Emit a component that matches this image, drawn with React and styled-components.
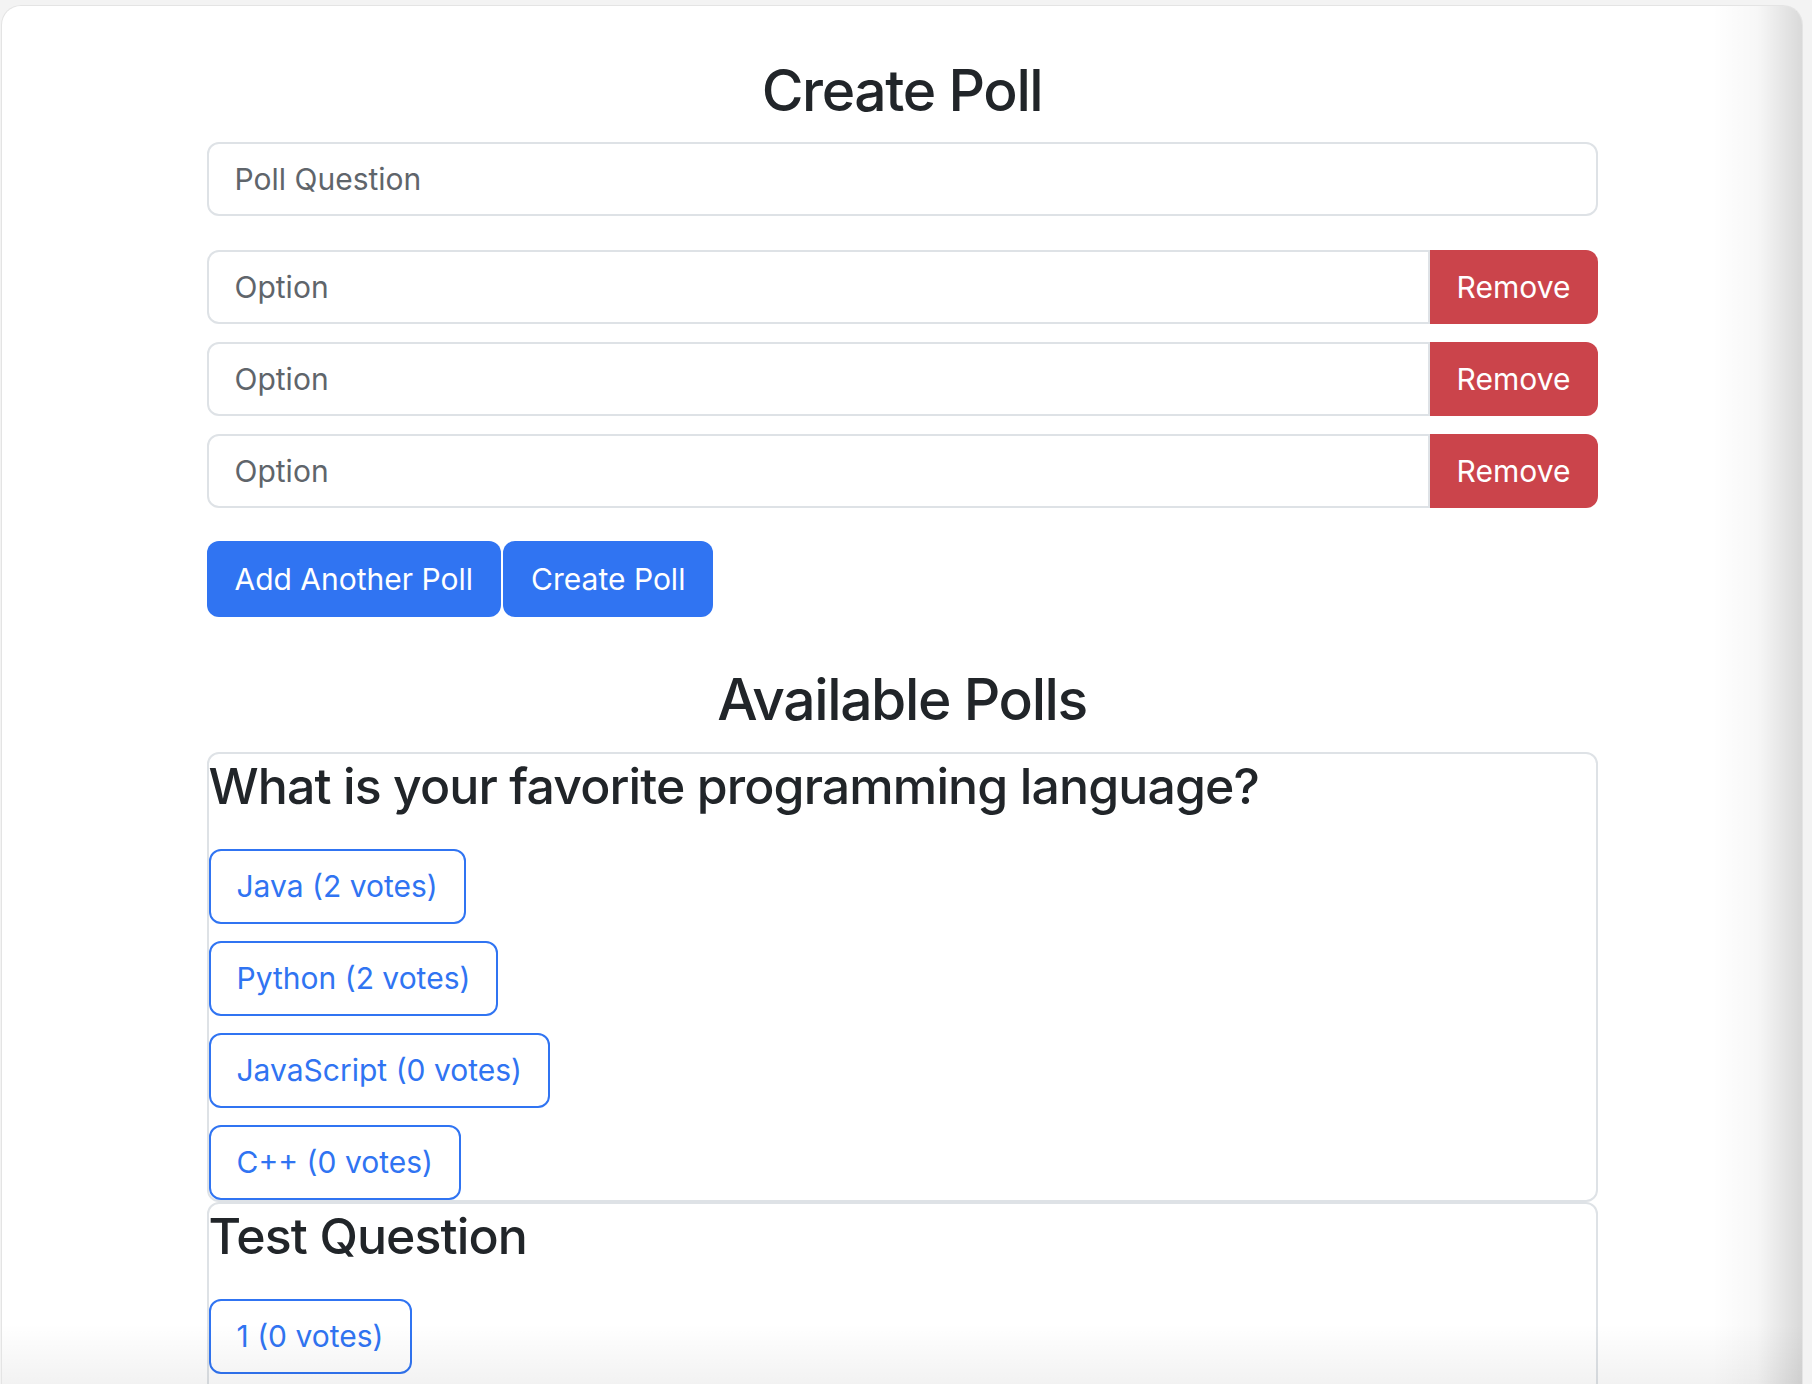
import React from 'react'
import styled, { createGlobalStyle } from 'styled-components'

const GlobalStyle = createGlobalStyle`
  html, body {
    margin: 0;
    padding: 0;
    height: 100%;
    overflow: hidden;
    background: #f3f3f3;
  }
  body {
    font-family: Inter, "Noto Sans", "Liberation Sans", sans-serif;
    color: #212529;
  }
  * {
    box-sizing: border-box;
  }
`

const Frame = styled.div`
  position: relative;
  width: 1802px;
  height: calc(100vh - 5px);
  margin: 5px 0 0 1px;
  background: #fff;
  border: 1px solid #e4e4e4;
  border-bottom: none;
  border-radius: 20px 20px 0 0;
  overflow: hidden;

  &::before {
    content: '';
    position: absolute;
    top: 0;
    right: 0;
    bottom: 0;
    width: 90px;
    background: linear-gradient(to right, rgba(0, 0, 0, 0) 0%, rgba(0, 0, 0, 0.03) 50%, rgba(0, 0, 0, 0.15) 100%);
    pointer-events: none;
  }

  &::after {
    content: '';
    position: absolute;
    left: 0;
    right: 0;
    bottom: 0;
    height: 60px;
    background: linear-gradient(to bottom, rgba(0, 0, 0, 0), rgba(0, 0, 0, 0.05));
    pointer-events: none;
  }
`

const Container = styled.div`
  width: 1391px;
  margin: 0 auto;
  padding-top: 51px;
`

const Heading = styled.h2`
  margin: 0;
  text-align: center;
  font-size: 57px;
  font-weight: 500;
  line-height: 1.2;
  letter-spacing: -1.4px;
`

const TextInput = styled.input`
  display: block;
  width: 100%;
  height: 74px;
  padding: 0 26px;
  font-family: inherit;
  font-size: 30px;
  color: #212529;
  background: #fff;
  border: 2px solid #dee2e6;
  border-radius: ${(props) => (props.$joined ? '12px 0 0 12px' : '12px')};
  outline: none;

  &::placeholder {
    color: #5f656b;
  }
`

const QuestionInput = styled(TextInput)`
  margin: 17px 0 34px;
`

const OptionRow = styled.div`
  display: flex;
  margin-bottom: 18px;
`

const RemoveButton = styled.button`
  flex: 0 0 168px;
  height: 74px;
  border: none;
  border-radius: 0 12px 12px 0;
  background: #cb444b;
  color: #fff;
  font-family: inherit;
  font-size: 30px;
  cursor: pointer;
`

const Actions = styled.div`
  display: flex;
  gap: 2px;
  margin: 33px 0 49px;
`

const PrimaryButton = styled.button`
  height: 76px;
  padding: 0 28px;
  border: none;
  border-radius: 12px;
  background: #3074f2;
  color: #fff;
  font-family: inherit;
  font-size: 30px;
  cursor: pointer;
`

const PollList = styled.div`
  margin-top: 17px;
`

const PollCard = styled.div`
  border: 2px solid #dee2e6;
  border-radius: 12px;
  padding-bottom: ${(props) => (props.$last ? '120px' : '0')};
`

const PollQuestion = styled.h3`
  margin: 0 0 33px;
  padding-top: 2px;
  font-size: 50px;
  font-weight: 500;
  line-height: 1.2;
  letter-spacing: -0.9px;
`

const VoteList = styled.div`
  display: flex;
  flex-direction: column;
  align-items: flex-start;
  gap: 17px;
`

const VoteButton = styled.button`
  height: 75px;
  padding: 0 26px;
  border: 2px solid #3074f2;
  border-radius: 12px;
  background: #fff;
  color: #3074f2;
  font-family: inherit;
  font-size: 30px;
  cursor: pointer;
`

const polls = [
  {
    question: 'What is your favorite programming language?',
    options: [
      { text: 'Java', votes: 2 },
      { text: 'Python', votes: 2 },
      { text: 'JavaScript', votes: 0 },
      { text: 'C++', votes: 0 },
    ],
  },
  {
    question: 'Test Question',
    options: [{ text: '1', votes: 0 }],
  },
]

function App() {
  const options = ['', '', '']

  return (
    <>
      <GlobalStyle />
      <Frame>
        <Container>
          <Heading>Create Poll</Heading>
          <QuestionInput placeholder="Poll Question" />
          {options.map((opt, i) => (
            <OptionRow key={i}>
              <TextInput $joined placeholder="Option" />
              <RemoveButton>Remove</RemoveButton>
            </OptionRow>
          ))}
          <Actions>
            <PrimaryButton>Add Another Poll</PrimaryButton>
            <PrimaryButton>Create Poll</PrimaryButton>
          </Actions>

          <Heading>Available Polls</Heading>
          <PollList>
            {polls.map((poll, i) => (
              <PollCard key={poll.question} $last={i === polls.length - 1}>
                <PollQuestion>{poll.question}</PollQuestion>
                <VoteList>
                  {poll.options.map((o) => (
                    <VoteButton key={o.text}>
                      {o.text} ({o.votes} votes)
                    </VoteButton>
                  ))}
                </VoteList>
              </PollCard>
            ))}
          </PollList>
        </Container>
      </Frame>
    </>
  )
}

export default App
